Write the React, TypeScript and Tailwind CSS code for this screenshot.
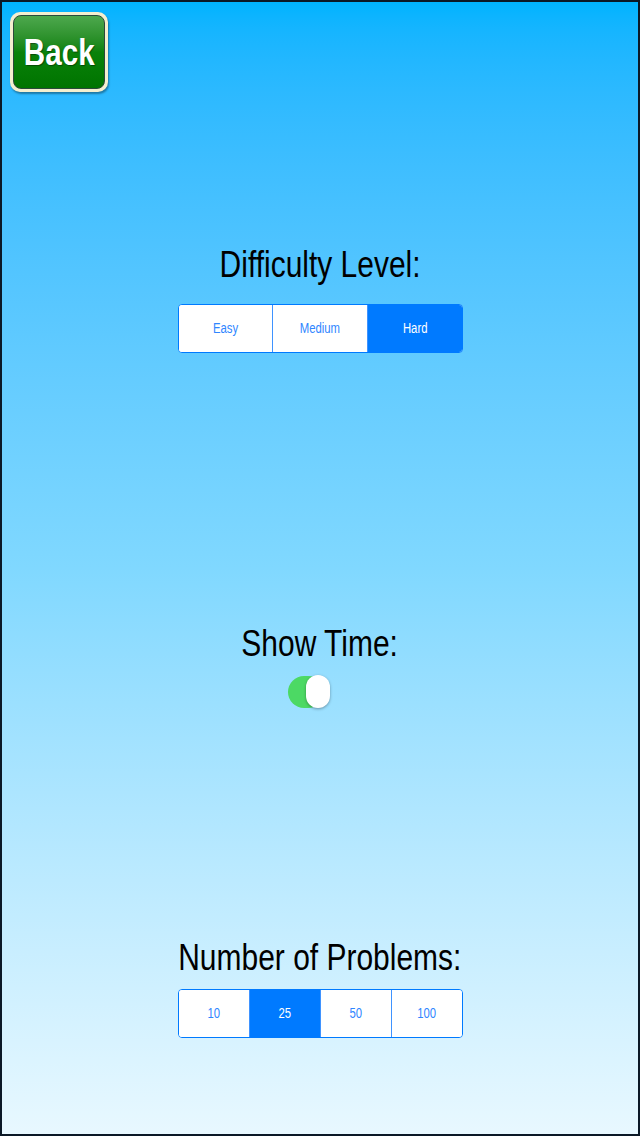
import React from "react";

const font = { fontFamily: '"Liberation Sans", Arial, sans-serif' };

function Segmented({ items, selected }: { items: string[]; selected: number }) {
  return (
    <div className="flex w-[285px] h-[49px] rounded-[4px] border border-[#007aff] overflow-hidden bg-white">
      {items.map((it, i) => (
        <div
          key={it}
          className={
            "flex-1 flex items-center justify-center " +
            (i > 0 ? "border-l border-[#3f93ff] " : "") +
            (i === selected ? "bg-[#007aff] text-white" : "bg-white text-[#2f86ff]")
          }
        >
          <span className="inline-block text-[14px] scale-x-81">{it}</span>
        </div>
      ))}
    </div>
  );
}

function Title({ children }: { children: React.ReactNode }) {
  return (
    <div className="text-[37px] leading-[44px] text-black text-center scale-x-81 whitespace-nowrap">
      {children}
    </div>
  );
}

export default function App() {
  return (
    <div
      className="w-[640px] h-[1136px] border-2 border-[#0b1826] bg-gradient-to-b from-[#00b3ff] via-[#80d8ff] to-[#e8f8ff] flex flex-col overflow-hidden"
      style={font}
    >
      <div className="ml-[8px] mt-[10px] w-[98px] h-[80px] rounded-[10px] bg-[#f4efcf] p-[3px] shadow-[1px_2px_2px_rgba(0,0,0,0.35)]">
        <div className="w-full h-full rounded-[8px] border border-[#2b4a3a] bg-gradient-to-b from-[#4da84d] via-[#0a820a] to-[#007400] flex items-center justify-center">
          <span className="inline-block text-white font-bold text-[37px] leading-none scale-x-80 [text-shadow:1px_1px_1px_rgba(0,0,0,0.4)]">
            Back
          </span>
        </div>
      </div>

      <div className="flex flex-col items-center mt-[151px]">
        <Title>Difficulty Level:</Title>
        <div className="mt-[17px]">
          <Segmented items={["Easy", "Medium", "Hard"]} selected={2} />
        </div>
      </div>

      <div className="flex flex-col items-center mt-[269px]">
        <Title>Show Time:</Title>
        <div className="mt-[9px] mr-[22px] relative w-[42px] h-[34px]">
          <div className="absolute left-0 top-[1px] w-[36px] h-[32px] rounded-full bg-[#4cd964]" />
          <div className="absolute right-0 top-0 w-[24px] h-[33px] rounded-full bg-white shadow-[0_1px_3px_rgba(0,0,0,0.35)]" />
        </div>
      </div>

      <div className="flex flex-col items-center mt-[227px]">
        <Title>Number of Problems:</Title>
        <div className="mt-[9px]">
          <Segmented items={["10", "25", "50", "100"]} selected={1} />
        </div>
      </div>
    </div>
  );
}
